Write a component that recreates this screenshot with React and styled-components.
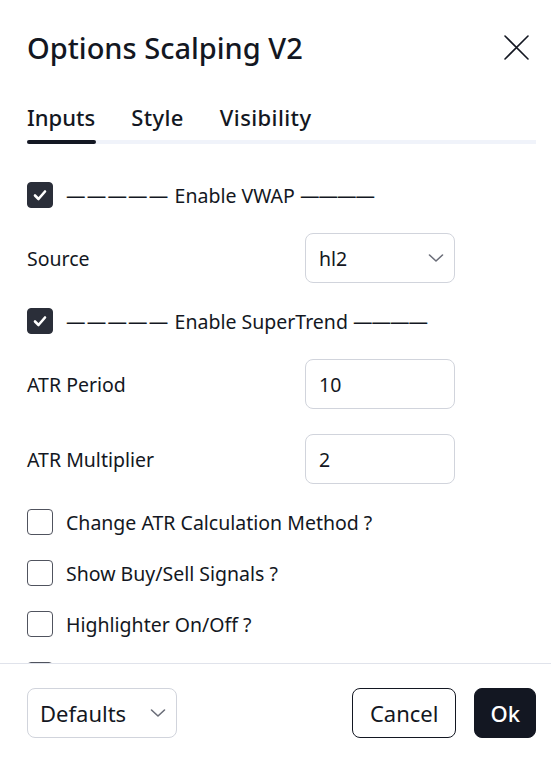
import styled, { createGlobalStyle } from 'styled-components'

const GlobalStyle = createGlobalStyle`
  html, body {
    margin: 0;
    padding: 0;
    background: #ffffff;
  }
  body {
    font-family: 'Noto Sans', 'Open Sans', sans-serif;
    color: #131722;
  }
  * {
    box-sizing: border-box;
  }
`

const Dialog = styled.div`
  width: 551px;
  height: 761px;
  display: flex;
  flex-direction: column;
  background: #ffffff;
  overflow: hidden;
`

const Header = styled.div`
  height: 94px;
  flex-shrink: 0;
  display: flex;
  align-items: center;
  justify-content: space-between;
  padding: 0 22px 0 27px;
`

const Title = styled.h1`
  margin: 0;
  font-size: 29px;
  font-weight: 500;
  color: #131722;
`

const CloseButton = styled.button`
  width: 25px;
  height: 25px;
  padding: 0;
  border: none;
  background: none;
  display: flex;
  cursor: pointer;
`

const Tabs = styled.div`
  margin: 0 15px 0 27px;
  display: flex;
  gap: 36px;
  border-bottom: 4px solid #f0f3fa;
  flex-shrink: 0;
`

const Tab = styled.button`
  position: relative;
  height: 46px;
  padding: 0;
  border: none;
  background: none;
  font-family: inherit;
  font-size: 22px;
  font-weight: 500;
  letter-spacing: ${p => (p.$active ? 0 : 0.4)}px;
  color: #131722;
  cursor: pointer;

  &::after {
    content: '';
    position: absolute;
    left: 0;
    right: -1px;
    bottom: -4px;
    height: 4px;
    border-radius: 2px;
    background: ${p => (p.$active ? '#131722' : 'transparent')};
  }
`

const Content = styled.div`
  flex: 1;
  overflow: hidden;
  padding: 38px 27px 0 27px;
  display: flex;
  flex-direction: column;
  gap: 25px;
`

const CheckRow = styled.label`
  height: 26px;
  display: flex;
  align-items: center;
  gap: 13px;
  font-size: 19.5px;
  white-space: nowrap;
  flex-shrink: 0;
`

const Dashes = styled.span`
  letter-spacing: ${p => p.$spacing}px;
`

const Box = styled.span`
  width: 26px;
  height: 26px;
  flex-shrink: 0;
  border-radius: 4px;
  display: flex;
  align-items: center;
  justify-content: center;
  background: ${p => (p.$checked ? '#2a2e39' : '#ffffff')};
  border: 1px solid ${p => (p.$checked ? '#2a2e39' : '#50535e')};
`

const FieldRow = styled.div`
  height: 50px;
  display: flex;
  align-items: center;
  flex-shrink: 0;
  font-size: 19.5px;
`

const Label = styled.span`
  width: 278px;
`

const Field = styled.div`
  width: 150px;
  height: 50px;
  border: 1px solid #d1d4dc;
  border-radius: 8px;
  display: flex;
  align-items: center;
  justify-content: space-between;
  padding: 0 10px 0 13px;
  font-size: 19.5px;
  color: #131722;
`

const Footer = styled.div`
  height: 98px;
  flex-shrink: 0;
  border-top: 1px solid #e0e3eb;
  display: flex;
  align-items: center;
  padding: 0 15px 0 27px;
  gap: 18px;
`

const DefaultsSelect = styled(Field)`
  padding: 0 10px 0 12px;
  margin-right: auto;
  font-size: 22px;
`

const Button = styled.button`
  height: 50px;
  padding: 0 ${p => (p.$primary ? '15px' : '17px')};
  border-radius: 8px;
  font-family: inherit;
  font-size: 22px;
  font-weight: ${p => (p.$primary ? 500 : 400)};
  color: ${p => (p.$primary ? '#ffffff' : '#131722')};
  background: ${p => (p.$primary ? '#131722' : '#ffffff')};
  border: 1px solid #131722;
  cursor: pointer;
`

function Check() {
  return (
    <svg width="18" height="18" viewBox="0 0 18 18" fill="none">
      <path
        d="M4 9.5 L7.5 13 L14 5.5"
        stroke="#ffffff"
        strokeWidth="2.6"
        strokeLinecap="round"
        strokeLinejoin="round"
      />
    </svg>
  )
}

function Chevron() {
  return (
    <svg width="16" height="10" viewBox="0 0 16 10" fill="none">
      <path
        d="M1.5 2 L8 8 L14.5 2"
        stroke="#6a6d78"
        strokeWidth="1.6"
        strokeLinecap="round"
        strokeLinejoin="round"
      />
    </svg>
  )
}

function Checkbox({ checked, children }) {
  return (
    <CheckRow>
      <Box $checked={checked}>{checked && <Check />}</Box>
      {children && <span>{children}</span>}
    </CheckRow>
  )
}

export default function App() {
  return (
    <Dialog>
      <GlobalStyle />
      <Header>
        <Title>Options Scalping V2</Title>
        <CloseButton aria-label="Close">
          <svg width="25" height="25" viewBox="0 0 25 25" fill="none">
            <path
              d="M1 1 L24 24 M24 1 L1 24"
              stroke="#131722"
              strokeWidth="1.6"
              strokeLinecap="round"
            />
          </svg>
        </CloseButton>
      </Header>

      <Tabs>
        <Tab $active>Inputs</Tab>
        <Tab>Style</Tab>
        <Tab>Visibility</Tab>
      </Tabs>

      <Content>
        <Checkbox checked>
          <Dashes $spacing={1.2}>—————</Dashes> Enable VWAP{' '}
          <Dashes $spacing={-1}>————</Dashes>
        </Checkbox>
        <FieldRow>
          <Label>Source</Label>
          <Field>
            hl2
            <Chevron />
          </Field>
        </FieldRow>
        <Checkbox checked>
          <Dashes $spacing={1.2}>—————</Dashes> Enable SuperTrend{' '}
          <Dashes $spacing={-1}>————</Dashes>
        </Checkbox>
        <FieldRow>
          <Label>ATR Period</Label>
          <Field>10</Field>
        </FieldRow>
        <FieldRow>
          <Label>ATR Multiplier</Label>
          <Field>2</Field>
        </FieldRow>
        <Checkbox>Change ATR Calculation Method ?</Checkbox>
        <Checkbox>Show Buy/Sell Signals ?</Checkbox>
        <Checkbox>Highlighter On/Off ?</Checkbox>
        <Checkbox />
      </Content>

      <Footer>
        <DefaultsSelect>
          Defaults
          <Chevron />
        </DefaultsSelect>
        <Button>Cancel</Button>
        <Button $primary>Ok</Button>
      </Footer>
    </Dialog>
  )
}
